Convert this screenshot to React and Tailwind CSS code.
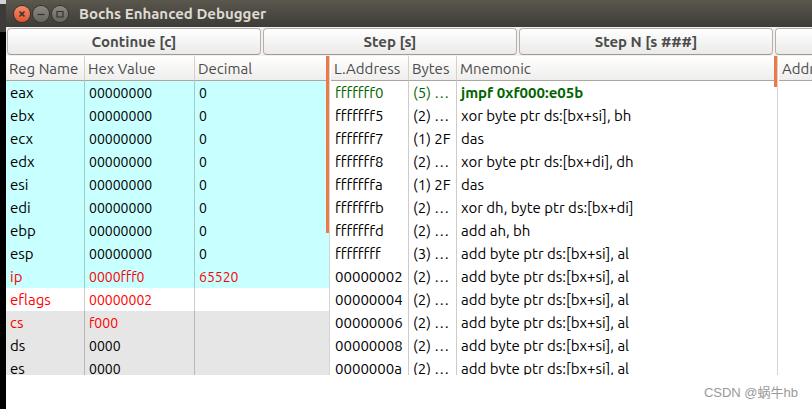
import React from 'react'

const registers = [
    { name: 'eax', hex: '00000000', dec: '0' },
    { name: 'ebx', hex: '00000000', dec: '0' },
    { name: 'ecx', hex: '00000000', dec: '0' },
    { name: 'edx', hex: '00000000', dec: '0' },
    { name: 'esi', hex: '00000000', dec: '0' },
    { name: 'edi', hex: '00000000', dec: '0' },
    { name: 'ebp', hex: '00000000', dec: '0' },
    { name: 'esp', hex: '00000000', dec: '0' },
    { name: 'ip', hex: '0000fff0', dec: '65520', changed: true },
    { name: 'eflags', hex: '00000002', dec: '', changed: true, group: 'flags' },
    { name: 'cs', hex: 'f000', dec: '', changed: true, group: 'segment' },
    { name: 'ds', hex: '0000', dec: '', group: 'segment' },
    { name: 'es', hex: '0000', dec: '', group: 'segment' },
]

const instructions = [
    { address: 'fffffff0', bytes: '(5) …', mnemonic: 'jmpf 0xf000:e05b' },
    { address: 'fffffff5', bytes: '(2) …', mnemonic: 'xor byte ptr ds:[bx+si], bh' },
    { address: 'fffffff7', bytes: '(1) 2F', mnemonic: 'das' },
    { address: 'fffffff8', bytes: '(2) …', mnemonic: 'xor byte ptr ds:[bx+di], dh' },
    { address: 'fffffffa', bytes: '(1) 2F', mnemonic: 'das' },
    { address: 'fffffffb', bytes: '(2) …', mnemonic: 'xor dh, byte ptr ds:[bx+di]' },
    { address: 'fffffffd', bytes: '(2) …', mnemonic: 'add ah, bh' },
    { address: 'ffffffff', bytes: '(3) …', mnemonic: 'add byte ptr ds:[bx+si], al' },
    { address: '00000002', bytes: '(2) …', mnemonic: 'add byte ptr ds:[bx+si], al' },
    { address: '00000004', bytes: '(2) …', mnemonic: 'add byte ptr ds:[bx+si], al' },
    { address: '00000006', bytes: '(2) …', mnemonic: 'add byte ptr ds:[bx+si], al' },
    { address: '00000008', bytes: '(2) …', mnemonic: 'add byte ptr ds:[bx+si], al' },
    { address: '0000000a', bytes: '(2) …', mnemonic: 'add byte ptr ds:[bx+si], al' },
]

const groupColors = {
    general: 'bg-[#c8ffff]',
    flags: 'bg-white',
    segment: 'bg-[#e6e6e6]',
}

const WindowButton = ({ label, close, children }) => (
    <button
        aria-label={label}
        className={
            close
                ? 'size-4 rounded-full bg-linear-to-b from-[#f58a68] to-[#e2532a] ring-1 ring-[#35332e]'
                : 'size-4 rounded-full bg-linear-to-b from-[#8a8880] to-[#67655f] ring-1 ring-[#35332e]'
        }
    >
        <svg
            viewBox="0 0 16 16"
            className="size-4"
            fill="none"
            stroke="#35332e"
            strokeWidth="1.2"
        >
            {children}
        </svg>
    </button>
)

const ToolButton = ({ children }) => (
    <button className="h-[27px] min-w-0 flex-1 rounded border border-[#b5b0ab] border-b-[#a09a94] bg-linear-to-b from-white to-[#ebeae9] font-bold text-[#4c4c4c]">
        {children}
    </button>
)

const HeadCell = ({ children, last }) => (
    <th
        className={`h-[25px] border-b border-b-[#aca5a0] bg-linear-to-b from-white to-[#efeeed] p-0 pt-[2px] pl-[3px] text-left font-normal whitespace-nowrap text-[#4c4c4c] ${
            last ? '' : 'border-r border-r-[#d5d1ce]'
        }`}
    >
        {children}
    </th>
)

const Cell = ({ children, last, className = '' }) => (
    <td
        className={`h-[23px] overflow-hidden p-0 pl-1 whitespace-nowrap ${
            last ? '' : 'border-r border-r-black/20'
        } ${className}`}
    >
        {children}
    </td>
)

const App = () => {
    return (
        <div className="flex h-screen overflow-hidden bg-white font-['Ubuntu','Noto_Sans',sans-serif] text-[15px] leading-5 text-black">
            {/* desktop behind the window */}
            <div className="flex w-[6px] shrink-0 flex-col bg-black">
                <div className="h-1 bg-[#d4d4d4]" />
                <div className="h-7 bg-[#3c3b37]" />
            </div>

            <div className="flex min-w-0 flex-1 flex-col">
                <header className="flex h-[27px] shrink-0 items-center bg-linear-to-b from-[#5a574d] to-[#3d3c38] pl-2">
                    <div className="flex gap-[3px]">
                        <WindowButton label="Close" close>
                            <path d="M5.5 5.5l5 5M10.5 5.5l-5 5" strokeWidth="1.6" />
                        </WindowButton>
                        <WindowButton label="Minimize">
                            <path d="M4.5 8.5h7" />
                        </WindowButton>
                        <WindowButton label="Maximize">
                            <path d="M5 5.5h6v5.5H5z" />
                        </WindowButton>
                    </div>
                    <h1 className="pl-[11px] font-bold text-[#dfdbd2]">
                        Bochs Enhanced Debugger
                    </h1>
                </header>

                <div className="flex h-[29px] shrink-0 items-center gap-[2px] bg-[#f2f1f0] pl-px">
                    <ToolButton>Continue [c]</ToolButton>
                    <ToolButton>Step [s]</ToolButton>
                    <ToolButton>Step N [s ###]</ToolButton>
                    <button
                        aria-label="Refresh"
                        className="h-[27px] w-[37px] shrink-0 rounded-l border border-r-0 border-[#b5b0ab] border-b-[#a09a94] bg-linear-to-b from-white to-[#ebeae9]"
                    />
                </div>

                <main className="flex min-h-0 flex-1 overflow-hidden">
                    <section className="relative w-[324px] shrink-0 overflow-hidden border-r border-[#d5d5d5]">
                        <table className="w-full table-fixed border-separate border-spacing-0">
                            <colgroup>
                                <col className="w-[79px]" />
                                <col className="w-[110px]" />
                                <col />
                            </colgroup>
                            <thead>
                                <tr>
                                    <HeadCell>Reg Name</HeadCell>
                                    <HeadCell>Hex Value</HeadCell>
                                    <HeadCell last>Decimal</HeadCell>
                                </tr>
                            </thead>
                            <tbody>
                                {registers.map((reg) => (
                                    <tr
                                        key={reg.name}
                                        className={`${groupColors[reg.group || 'general']} ${
                                            reg.changed ? 'text-[#ff0000]' : ''
                                        }`}
                                    >
                                        <Cell>{reg.name}</Cell>
                                        <Cell className="text-sm">{reg.hex}</Cell>
                                        <Cell last className="text-sm">
                                            {reg.dec}
                                        </Cell>
                                    </tr>
                                ))}
                            </tbody>
                        </table>
                        <div className="absolute top-0 right-0 h-[177px] w-[3px] bg-[#f07746]" />
                    </section>

                    <section className="relative min-w-0 flex-1 overflow-hidden pl-px">
                        <table className="w-full table-fixed border-separate border-spacing-0">
                            <colgroup>
                                <col className="w-[78px]" />
                                <col className="w-[48px]" />
                                <col />
                            </colgroup>
                            <thead>
                                <tr>
                                    <HeadCell>L.Address</HeadCell>
                                    <HeadCell>Bytes</HeadCell>
                                    <HeadCell last>Mnemonic</HeadCell>
                                </tr>
                            </thead>
                            <tbody>
                                {instructions.map((ins, i) => (
                                    <tr
                                        key={ins.address}
                                        className={i === 0 ? 'text-[#006400]' : ''}
                                    >
                                        <Cell>{ins.address}</Cell>
                                        <Cell>{ins.bytes}</Cell>
                                        <Cell last className={i === 0 ? 'font-bold' : ''}>
                                            {ins.mnemonic}
                                        </Cell>
                                    </tr>
                                ))}
                            </tbody>
                        </table>
                        <div className="absolute top-0 right-0 h-[31px] w-[3px] bg-[#f07746]" />
                    </section>

                    <section className="w-[35px] shrink-0 border-l border-[#d5d5d5] pl-px">
                        <table className="w-full table-fixed border-separate border-spacing-0">
                            <thead>
                                <tr>
                                    <HeadCell last>Addr</HeadCell>
                                </tr>
                            </thead>
                        </table>
                    </section>
                </main>

                <footer className="flex h-[34px] shrink-0 items-center justify-end pt-[2px] pr-[14px] font-['Liberation_Sans','Noto_Sans_CJK_SC',sans-serif] text-[13px] text-[#999999]">
                    CSDN @蜗牛hb
                </footer>
            </div>
        </div>
    )
}

export default App
